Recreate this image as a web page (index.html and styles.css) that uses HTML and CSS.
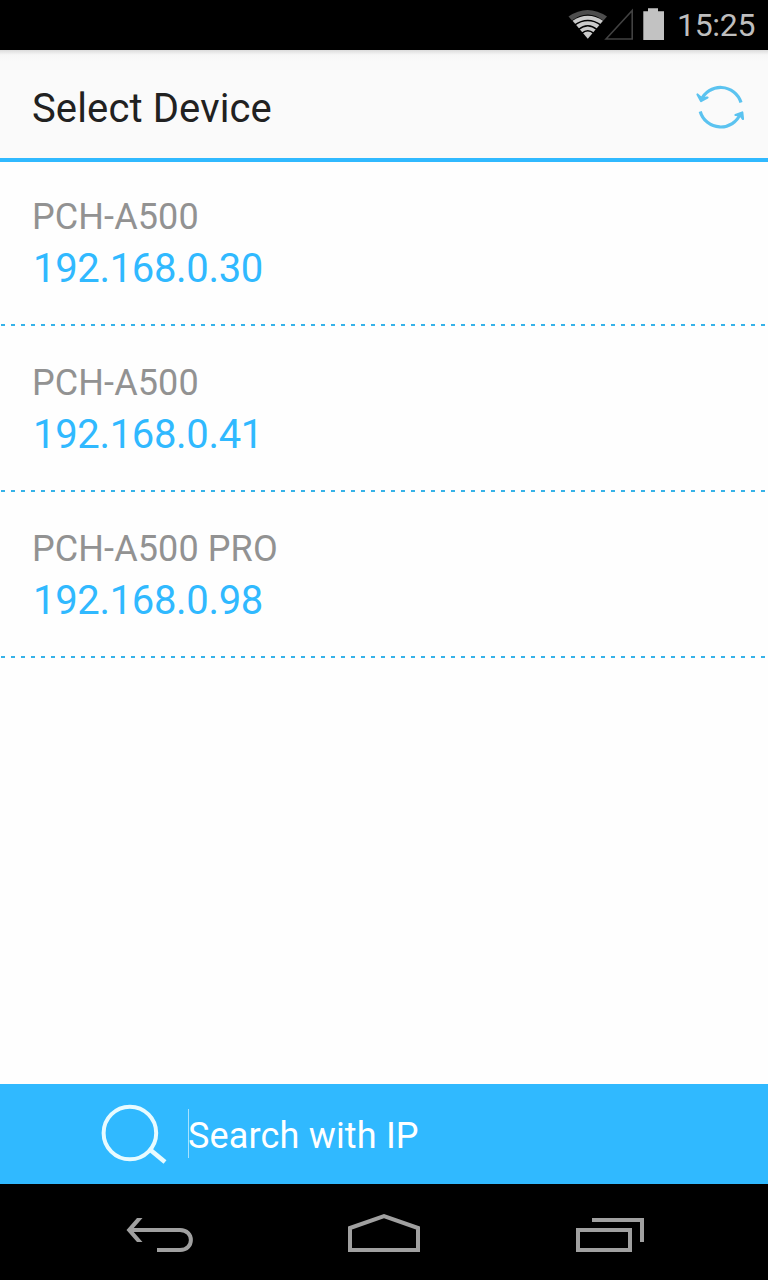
FILE: index.html
```html
<!DOCTYPE html>
<html lang="en">
<head>
<meta charset="utf-8">
<title>Select Device</title>
<link rel="stylesheet" href="styles.css">
</head>
<body>
<div class="screen">
  <div class="status-bar">
    <svg class="status-icons" width="104" height="50" viewBox="0 0 104 50">
      <path fill="#4d4d4d" d="M8.500 16.500Q27.500 3.500 47 16.500L27.800 38.500Z"/>
      <path fill="#000" d="M11.800 20.500Q27.800 8.500 43.500 20.500L27.800 39Z"/>
      <path fill="#cacaca" d="M12.600 20.700Q27.800 11 43 20.700L27.800 38.800Z"/>
      <path fill="none" stroke="#000" stroke-width="1.500" d="M14.500 25.200Q27.800 16 41 25.200M18.500 29.500Q27.800 22 37 29.500M22 33.200Q27.800 28.500 33.500 33.200"/>
      <path fill="none" stroke="#424242" stroke-width="1.600" d="M46 39L72.200 10.500V39Z"/>
      <path fill="#c2c2c2" d="M83.300 11.300h4.700v-3h10v3h6v28.600h-20.700z"/>
    </svg>
    <span class="clock">15:25</span>
  </div>
  <header class="header">
    <h1 class="title">Select Device</h1>
    <svg class="refresh" width="56" height="56" viewBox="0 0 56 56">
      <g fill="none" stroke="#5bc3f0" stroke-width="3.200">
        <path d="M9 22.500A21.300 21.300 0 0 1 49 24.500"/>
        <path d="M8.200 33.500A21.300 21.300 0 0 0 48.500 35.500"/>
      </g>
      <path fill="#5bc3f0" stroke="#5bc3f0" stroke-width="2.200" stroke-linejoin="round" d="M5.500 16.500L9 23L15.500 19.500L9.500 20ZM43.500 37L50.300 34.500L51 41L48.500 37.500Z"/>
    </svg>
  </header>
  <main class="devices">
    <div class="device"><span class="name">PCH-A500</span><span class="ip">192.168.0.30</span></div>
    <div class="device"><span class="name">PCH-A500</span><span class="ip">192.168.0.41</span></div>
    <div class="device"><span class="name">PCH-A500 PRO</span><span class="ip">192.168.0.98</span></div>
  </main>
  <div class="search">
    <svg width="70" height="64" viewBox="0 0 70 64" fill="none" stroke="#e8fbff">
      <circle cx="29.900" cy="31" r="26.300" stroke-width="4"/>
      <path d="M50.500 48L65 60" stroke-width="4.600"/>
    </svg>
    <span class="caret"></span>
    <span class="hint">Search with IP</span>
  </div>
  <nav class="nav-bar">
    <svg width="768" height="96" viewBox="0 0 768 96" fill="none" stroke="#a0a0a0" stroke-width="4">
      <path d="M130 46H180C194.500 46 194.500 66 180 66H157"/>
      <path fill="#a0a0a0" stroke="none" d="M126.500 46L137 34H142.500L132 46L142.500 58H137Z"/>
      <path d="M350 66V44L384 32L418 44V66Z"/>
      <path d="M578 46H630V66H578ZM592 36H642V58"/>
    </svg>
  </nav>
</div>
</body>
</html>
```
FILE: styles.css
```css
body {
  margin: 0;
  font-family: Roboto, "Noto Sans", sans-serif;
}
.screen {
  display: flex;
  flex-direction: column;
  width: 768px;
  height: 1280px;
  overflow: hidden;
  background: #fefefe;
}
.status-bar {
  display: flex;
  justify-content: flex-end;
  height: 50px;
  background: #000;
}
.status-icons {
  margin-right: 13px;
}
.clock {
  width: 91px;
  color: #bebebe;
  font-size: 32px;
  line-height: 51px;
  letter-spacing: -0.3px;
  white-space: nowrap;
}
.header {
  display: flex;
  justify-content: space-between;
  align-items: flex-start;
  box-sizing: border-box;
  height: 112px;
  padding: 28px 20px 0 32px;
  border-bottom: 4px solid #30b9ff;
  background: linear-gradient(#dcdcdc, #f7f7f7 5px, #fafafa 12px);
}
.title {
  margin: 7px 0 0;
  color: #212121;
  font-size: 40px;
  font-weight: 400;
  line-height: 48px;
  letter-spacing: 0.12px;
}
.devices {
  flex: 1;
}
.device {
  display: flex;
  flex-direction: column;
  box-sizing: border-box;
  height: 166px;
  padding: 36px 32px 0;
  background: repeating-linear-gradient(90deg, transparent 0 1px, #36b2e8 1px 5px, transparent 5px 10px) left bottom / 100% 2px no-repeat;
}
.device:first-child {
  height: 164px;
  padding-top: 34px;
}
.name {
  color: #929292;
  font-size: 36px;
  line-height: 42px;
  letter-spacing: 0.1px;
}
.ip {
  padding-left: 1px;
  color: #30b9ff;
  font-size: 40px;
  line-height: 62px;
  letter-spacing: -0.33px;
}
.search {
  display: flex;
  align-items: center;
  height: 100px;
  padding-left: 100px;
  background: #30b9ff;
}
.caret {
  width: 1px;
  height: 49px;
  margin: 0 0 2px 18px;
  background: #a8e2ff;
}
.hint {
  margin: 3px 0 0 -1px;
  color: #fff;
  font-size: 36px;
  line-height: 42px;
  letter-spacing: 0.17px;
}
.nav-bar {
  height: 96px;
  background: #000;
}
```
